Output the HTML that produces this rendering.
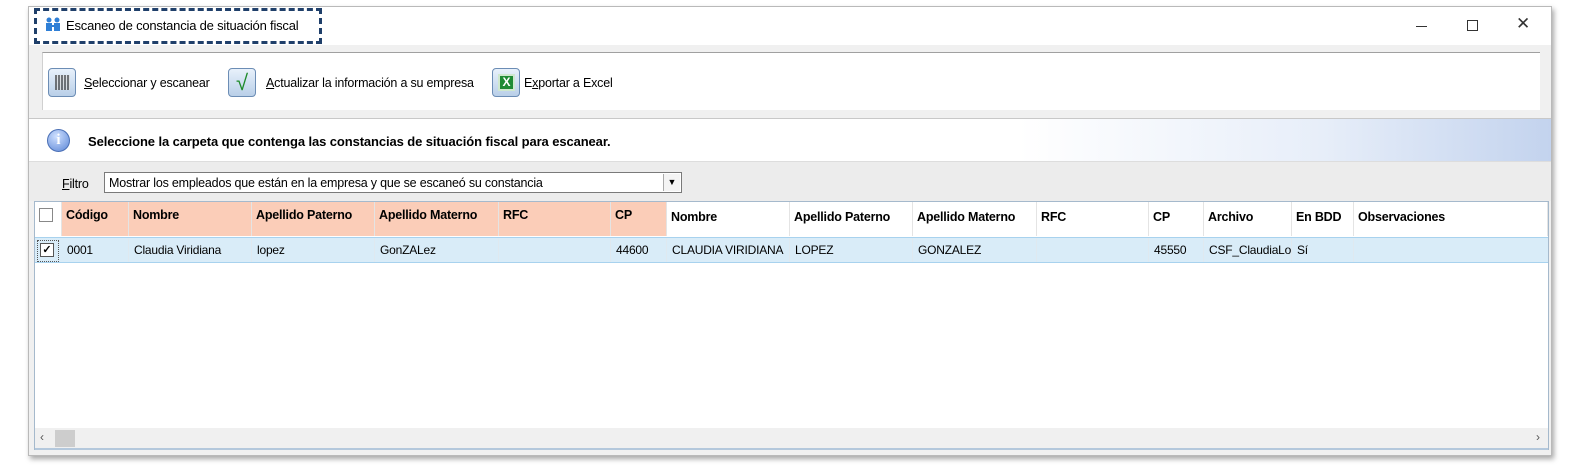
<!DOCTYPE html>
<html><head><meta charset="utf-8"><style>
*{box-sizing:border-box;margin:0;padding:0}
body{width:1596px;height:470px;background:#fff;font-family:"Liberation Sans",sans-serif;font-size:12px;color:#000;position:relative;overflow:hidden}
.a{position:absolute}
.win{left:28px;top:6px;width:1524px;height:450px;background:#f0f0f0;border:1px solid #b9b9b9;box-shadow:2px 3px 5px rgba(0,0,0,.35)}
.t{font-size:12.5px;letter-spacing:-.2px}
.hd{top:202px;height:34px;font-weight:bold;font-size:12.5px;padding:6px 0 0 4px;border-right:1px solid #e4e4e4;letter-spacing:-.2px}
.s{background:#fbcdb8}
.w{background:#fff}
.rw{top:238px;height:24px;padding:5px 0 0 5px;font-size:12px;letter-spacing:-.2px;border-right:1px solid #dfe9f0}
</style></head><body>
<div class="a win"></div>
<!-- title bar -->
<div class="a" style="left:29px;top:7px;width:1522px;height:38px;background:#fff"></div>
<div class="a" style="left:34px;top:8px;width:288px;height:36px;border:3px dashed #1f3f6a"></div>
<svg class="a" style="left:44px;top:17px" width="18" height="14" viewBox="0 0 18 14"><circle cx="5" cy="3" r="2.5" fill="#2f7fd6"/><circle cx="13" cy="3" r="2.5" fill="#2f7fd6"/><rect x="2" y="6" width="6" height="8" fill="#2f7fd6"/><rect x="10" y="6" width="6" height="8" fill="#2f7fd6"/><rect x="7" y="8" width="4" height="2" fill="#2f7fd6"/></svg>
<div class="a t" style="left:66px;top:18px;font-size:13px">Escaneo de constancia de situación fiscal</div>
<div class="a" style="left:1416px;top:26px;width:11px;height:1px;background:#333"></div>
<div class="a" style="left:1467px;top:20px;width:11px;height:11px;border:1px solid #333"></div>
<div class="a" style="left:1516px;top:14px;font-size:17px;color:#333">✕</div>
<!-- toolbar -->
<div class="a" style="left:42px;top:52px;width:1498px;height:58px;background:#fff;border-top:1px solid #a0a0a0;border-left:1px solid #d0d0d0"></div>
<div class="a" style="left:48px;top:68px;width:28px;height:29px;border:1px solid #6c8db5;border-radius:4px;background:linear-gradient(#e8f1fb,#b9cfe8)"><div style="margin:6px 0 0 6px;width:15px;height:15px;background:repeating-linear-gradient(90deg,#444 0 2px,#ddd 2px 3px),#444;opacity:.7"></div></div>
<div class="a t" style="left:84px;top:76px"><u>S</u>eleccionar y escanear</div>
<div class="a" style="left:228px;top:68px;width:28px;height:29px;border:1px solid #6c8db5;border-radius:4px;background:linear-gradient(#e8f1fb,#b9cfe8);color:#1e8a2a;font-size:22px;text-align:center;line-height:27px">√</div>
<div class="a t" style="left:266px;top:76px"><u>A</u>ctualizar la información a su empresa</div>
<div class="a" style="left:492px;top:68px;width:28px;height:29px;border:1px solid #6c8db5;border-radius:4px;background:linear-gradient(#e8f1fb,#b9cfe8)"><div style="margin:5px 0 0 5px;width:17px;height:17px;background:#1f8b35;border:2px solid #cfe8cf;color:#fff;font-weight:bold;font-size:12px;text-align:center;line-height:13px">X</div></div>
<div class="a t" style="left:524px;top:76px">E<u>x</u>portar a Excel</div>
<!-- info band -->
<div class="a" style="left:29px;top:118px;width:1522px;height:1px;background:#c8c8c8"></div>
<div class="a" style="left:29px;top:119px;width:1522px;height:42px;background:linear-gradient(90deg,#fff 0%,#fff 65%,#e7eef9 85%,#c3d3ee 100%)"></div>
<div class="a" style="left:47px;top:129px;width:23px;height:23px;border-radius:50%;background:radial-gradient(circle at 40% 30%,#cfe0ff,#5b86d6);border:1px solid #4a6fb5;color:#fff;font-weight:bold;text-align:center;line-height:21px;font-family:'Liberation Serif',serif;font-size:15px">i</div>
<div class="a" style="left:88px;top:134px;font-weight:bold;font-size:13px;letter-spacing:-.1px">Seleccione la carpeta que contenga las constancias de situación fiscal para escanear.</div>
<!-- filter -->
<div class="a" style="left:29px;top:161px;width:1522px;height:40px;background:#ececec;border-top:1px solid #ddd"></div>
<div class="a t" style="left:62px;top:177px"><u>F</u>iltro</div>
<div class="a" style="left:104px;top:172px;width:578px;height:21px;background:#fff;border:1px solid #7a7a7a"></div>
<div class="a t" style="left:109px;top:176px">Mostrar los empleados que están en la empresa y que se escaneó su constancia</div>
<div class="a" style="left:663px;top:174px;width:17px;height:17px;background:#f4f4f4;border-left:1px solid #aaa;font-size:9px;text-align:center;line-height:17px">▼</div>
<!-- grid -->
<div class="a" style="left:34px;top:201px;width:1515px;height:249px;background:#fff;border:1px solid #a5b9cc"></div>
<div class="a" style="left:35px;top:202px;width:27px;height:34px;background:#fff;border-right:1px solid #e4e4e4"></div>
<div class="a" style="left:39px;top:208px;width:14px;height:14px;border:1px solid #888;background:#fff"></div>
<div class="a hd s" style="left:62px;width:67px">Código</div>
<div class="a hd s" style="left:129px;width:123px">Nombre</div>
<div class="a hd s" style="left:252px;width:123px">Apellido Paterno</div>
<div class="a hd s" style="left:375px;width:124px">Apellido Materno</div>
<div class="a hd s" style="left:499px;width:112px">RFC</div>
<div class="a hd s" style="left:611px;width:56px">CP</div>
<div class="a hd w" style="left:667px;width:123px;padding-top:8px">Nombre</div>
<div class="a hd w" style="left:790px;width:123px;padding-top:8px">Apellido Paterno</div>
<div class="a hd w" style="left:913px;width:124px;padding-top:8px">Apellido Materno</div>
<div class="a hd w" style="left:1037px;width:112px;padding-top:8px">RFC</div>
<div class="a hd w" style="left:1149px;width:55px;padding-top:8px">CP</div>
<div class="a hd w" style="left:1204px;width:88px;padding-top:8px">Archivo</div>
<div class="a hd w" style="left:1292px;width:62px;padding-top:8px">En BDD</div>
<div class="a hd w" style="left:1354px;width:194px;padding-top:8px">Observaciones</div>
<div class="a" style="left:35px;top:237px;width:1513px;height:26px;background:#d9ecf8;border-top:1px solid #a8d2ee;border-bottom:1px solid #a8d2ee"></div>
<div class="a" style="left:37px;top:240px;width:22px;height:22px;border:1px dotted #555"></div>
<div class="a" style="left:40px;top:243px;width:14px;height:14px;border:1px solid #555;background:#fff;font-size:11px;line-height:12px;text-align:center;font-weight:bold">✓</div>
<div class="a rw" style="left:62px;width:67px">0001</div>
<div class="a rw" style="left:129px;width:123px">Claudia Viridiana</div>
<div class="a rw" style="left:252px;width:123px">lopez</div>
<div class="a rw" style="left:375px;width:124px">GonZALez</div>
<div class="a rw" style="left:499px;width:112px"></div>
<div class="a rw" style="left:611px;width:56px">44600</div>
<div class="a rw" style="left:667px;width:123px">CLAUDIA VIRIDIANA</div>
<div class="a rw" style="left:790px;width:123px">LOPEZ</div>
<div class="a rw" style="left:913px;width:124px">GONZALEZ</div>
<div class="a rw" style="left:1037px;width:112px"></div>
<div class="a rw" style="left:1149px;width:55px">45550</div>
<div class="a rw" style="left:1204px;width:88px">CSF_ClaudiaLo</div>
<div class="a rw" style="left:1292px;width:62px">Sí</div>
<!-- scrollbar -->
<div class="a" style="left:35px;top:428px;width:1513px;height:20px;background:#f0f0f0"></div>
<div class="a" style="left:55px;top:430px;width:20px;height:17px;background:#cdcdcd"></div>
<div class="a" style="left:40px;top:430px;font-size:12px;color:#555">‹</div>
<div class="a" style="left:1536px;top:430px;font-size:12px;color:#555">›</div>
<div class="a" style="left:35px;top:448px;width:1513px;height:2px;background:#b4c8dc"></div>
</body></html>
